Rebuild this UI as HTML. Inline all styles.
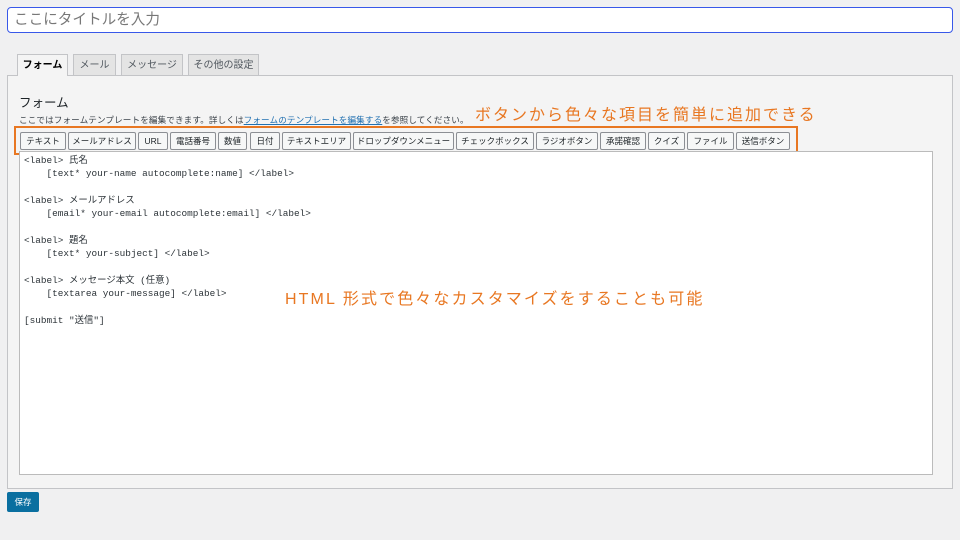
<!DOCTYPE html>
<html><head><meta charset="utf-8"><style>
body{margin:0;width:960px;height:540px;background:#f0f0f1;font-family:"Liberation Sans","Noto Sans CJK JP",sans-serif;position:relative;overflow:hidden;color:#1d2327}
.a{position:absolute}
.title{left:7px;top:7px;border:1px solid #3858e9;border-radius:4px;background:#fff;font-size:14.6px;color:#777;line-height:24px;padding-left:6px;box-sizing:border-box;width:946px;height:26px}
.tab{top:54px;height:21px;border:1px solid #c3c4c7;border-bottom:none;background:#e4e4e4;font-size:10px;line-height:21px;text-align:center;color:#50575e;box-sizing:border-box}
.panel{left:7px;top:75px;width:946px;height:414px;border:1px solid #c3c4c7;background:#f4f4f4;box-sizing:border-box}
.btn{top:132px;height:18px;border:1px solid #8c8f94;border-radius:2px;background:#f6f7f7;font-size:8.5px;line-height:16px;text-align:center;box-sizing:border-box;color:#1d2327}
.ta{left:19px;top:151px;width:914px;height:324px;border:1px solid #bbb;background:#fff;box-sizing:border-box}
pre{margin:0;font-family:"Liberation Mono","Noto Sans CJK JP",monospace;font-size:9.4px;line-height:13.33px;color:#2c3338;position:absolute;left:24px;top:154px}
.or{color:#e87722}
</style></head><body>
<div class="a title">ここにタイトルを入力</div>
<div class="a panel"></div>
<div class="a tab" style="left:17px;width:51px;height:22px;background:#f4f4f4;color:#000;font-weight:bold">フォーム</div>
<div class="a tab" style="left:73px;width:43px">メール</div>
<div class="a tab" style="left:121px;width:62px">メッセージ</div>
<div class="a tab" style="left:188px;width:71px">その他の設定</div>
<div class="a" style="left:19px;top:92px;font-size:12.5px">フォーム</div>
<div class="a" style="left:19px;top:114px;font-size:8.6px;color:#3c434a;letter-spacing:0.1px">ここではフォームテンプレートを編集できます。詳しくは<span style="color:#2271b1;text-decoration:underline">フォームのテンプレートを編集する</span>を参照してください。</div>
<div class="a or" style="left:475px;top:101px;font-size:16px;letter-spacing:2px">ボタンから色々な項目を簡単に追加できる</div>
<div class="a" style="left:14px;top:126px;width:784px;height:29px;border:2.5px solid #e87722;box-sizing:border-box"></div>
<div class="a btn" style="left:20px;width:46px">テキスト</div>
<div class="a btn" style="left:68px;width:68px">メールアドレス</div>
<div class="a btn" style="left:138px;width:30px">URL</div>
<div class="a btn" style="left:170px;width:46px">電話番号</div>
<div class="a btn" style="left:218px;width:29px">数値</div>
<div class="a btn" style="left:250px;width:30px">日付</div>
<div class="a btn" style="left:282px;width:69px">テキストエリア</div>
<div class="a btn" style="left:353px;width:101px">ドロップダウンメニュー</div>
<div class="a btn" style="left:456px;width:78px">チェックボックス</div>
<div class="a btn" style="left:536px;width:62px">ラジオボタン</div>
<div class="a btn" style="left:600px;width:46px">承諾確認</div>
<div class="a btn" style="left:648px;width:37px">クイズ</div>
<div class="a btn" style="left:687px;width:47px">ファイル</div>
<div class="a btn" style="left:736px;width:54px">送信ボタン</div>
<div class="a ta"></div>
<pre>&lt;label&gt; 氏名
    [text* your-name autocomplete:name] &lt;/label&gt;

&lt;label&gt; メールアドレス
    [email* your-email autocomplete:email] &lt;/label&gt;

&lt;label&gt; 題名
    [text* your-subject] &lt;/label&gt;

&lt;label&gt; メッセージ本文 (任意)
    [textarea your-message] &lt;/label&gt;

[submit "送信"]</pre>
<div class="a or" style="left:285px;top:285px;font-size:16px;letter-spacing:2.1px">HTML 形式で色々なカスタマイズをすることも可能</div>
<div class="a" style="left:7px;top:492px;width:32px;height:20px;background:#0a6fa0;border-radius:2px;color:#fff;font-size:8.5px;line-height:20px;text-align:center">保存</div>
</body></html>
